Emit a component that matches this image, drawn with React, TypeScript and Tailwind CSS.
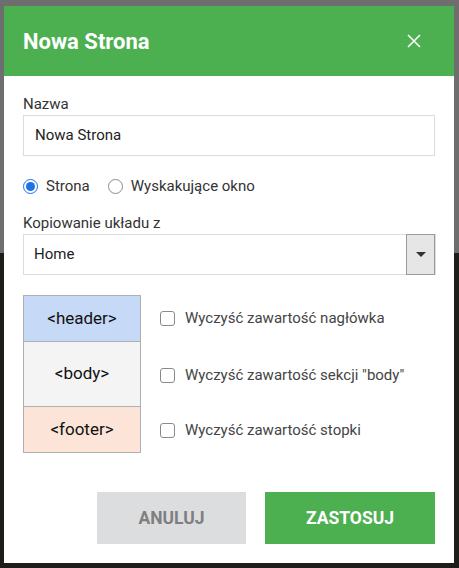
const font = { fontFamily: 'Roboto, "Noto Sans", sans-serif' };

const Radio = ({ checked, label }: { checked?: boolean; label: string }) => (
  <label className="flex items-center h-[20px]">
    <span
      className={
        checked
          ? 'w-[15px] h-[15px] rounded-full border border-[#1a73e8] flex items-center justify-center bg-white'
          : 'w-[15px] h-[15px] rounded-full border border-[#8a8a8a] bg-white'
      }
    >
      {checked && <span className="w-[9px] h-[9px] rounded-full bg-[#1a73e8]" />}
    </span>
    <span className="ml-[8px] text-[15px] leading-[20px] text-[#333]">{label}</span>
  </label>
);

const CheckRow = ({ label }: { label: string }) => (
  <div className="flex items-center">
    <span className="w-[15px] h-[15px] rounded-[3px] border border-[#8a8a8a] bg-white" />
    <span className="ml-[10px] text-[15px] text-[#444]">{label}</span>
  </div>
);

export default function App() {
  return (
    <div className="relative w-[459px] h-[568px] overflow-hidden" style={font}>
      <div className="absolute inset-0 flex flex-col">
        <div className="h-[253px] bg-[#6e6e6e]" />
        <div className="flex-1 bg-[#1f1d19]" />
      </div>

      <div className="relative mt-[6px] mx-[4px] w-[450px] h-[557px] bg-white flex flex-col">
        <div className="h-[70px] bg-[#4caf50] flex items-center justify-between pl-[19px] pr-[33px]">
          <span className="text-white text-[22px] font-bold">Nowa Strona</span>
          <svg width="14" height="14" viewBox="0 0 14 14" fill="none" stroke="white" strokeWidth="1.6">
            <path d="M1 1 L13 13 M13 1 L1 13" />
          </svg>
        </div>

        <div className="flex-1 flex flex-col px-[19px]">
          <div className="mt-[18px] text-[15px] text-[#333] leading-[20px]">Nazwa</div>
          <div className="mt-[1px] h-[41px] border border-[#dcdcdc] flex items-center px-[11px] text-[15px] text-[#222]">
            Nowa Strona
          </div>

          <div className="mt-[20px] flex items-center gap-[18px]">
            <Radio checked label="Strona" />
            <Radio label="Wyskakujące okno" />
          </div>

          <div className="mt-[17px] text-[15px] text-[#333] leading-[20px]">Kopiowanie układu z</div>
          <div className="mt-[1px] h-[41px] w-[413px] border border-[#dcdcdc] flex">
            <div className="flex-1 flex items-center px-[10px] text-[15px] text-[#222]">Home</div>
            <div className="w-[29px] -my-px border border-[#9a9a9a] bg-[#e6e6e6] flex items-center justify-center">
              <svg width="10" height="5" viewBox="0 0 10 5">
                <path d="M0 0 L10 0 L5 5 Z" fill="#333" />
              </svg>
            </div>
          </div>

          <div className="mt-[20px] flex">
            <div className="w-[118px] border border-[#b0b0b0] flex flex-col text-[17px] text-[#111]">
              <div className="h-[46px] bg-[#c6d9f7] border-b border-[#b0b0b0] flex items-center justify-center">&lt;header&gt;</div>
              <div className="h-[65px] bg-[#f4f4f4] border-b border-[#b0b0b0] flex items-center justify-center">&lt;body&gt;</div>
              <div className="h-[45px] bg-[#fde4d8] flex items-center justify-center">&lt;footer&gt;</div>
            </div>
            <div className="ml-[19px] flex flex-col">
              <div className="h-[47px] flex items-center"><CheckRow label="Wyczyść zawartość nagłówka" /></div>
              <div className="h-[66px] flex items-center"><CheckRow label='Wyczyść zawartość sekcji "body"' /></div>
              <div className="h-[45px] flex items-center"><CheckRow label="Wyczyść zawartość stopki" /></div>
            </div>
          </div>

          <div className="mt-[39px] flex justify-end gap-[19px]">
            <button className="w-[149px] h-[52px] bg-[#dcdddf] text-[#7f7f7f] text-[17.5px] font-bold">ANULUJ</button>
            <button className="w-[170px] h-[52px] bg-[#4caf50] text-white text-[17.5px] font-bold">ZASTOSUJ</button>
          </div>
        </div>
      </div>
    </div>
  );
}
